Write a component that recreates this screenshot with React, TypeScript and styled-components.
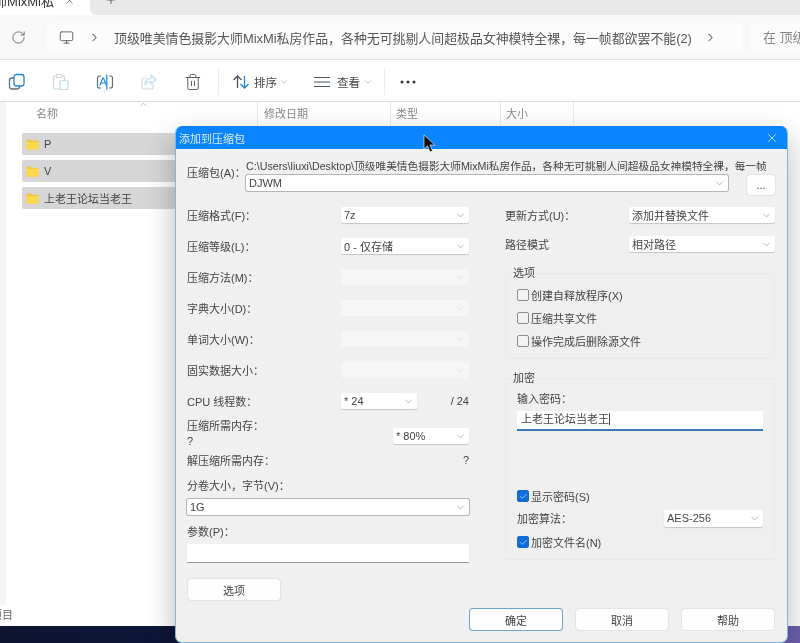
import React from "react";
import styled, { createGlobalStyle } from "styled-components";
import { ChevronDown, ChevronRight, ChevronUp, Monitor, Plus, RotateCw, X, Trash2, Check } from "lucide-react";

const Global = createGlobalStyle`
  html, body { margin: 0; padding: 0; background: #fff; }
  body { font-family: "Liberation Sans", "Noto Sans CJK SC", sans-serif; color: #444; }
  * { box-sizing: border-box; }
`;

const Page = styled.div`
  position: relative; width: 800px; height: 643px; overflow: hidden;
  display: flex; flex-direction: column; background: #fff; filter: blur(0.35px);
`;
const TabBar = styled.div`
  height: 15px; flex: none; display: flex; background: #fff; overflow: hidden;
`;
const Tab = styled.div`
  width: 90px; height: 15px; flex: none; display: flex; align-items: flex-start; gap: 10px; color: #444;
  svg { margin-top: -5px; flex: none; }
`;
const TabTitle = styled.div`
  width: 54px; height: 15px; overflow: hidden; white-space: nowrap; font-size: 13px; line-height: 4px; color: #333; flex: none;
  direction: rtl; text-align: left;
`;
const TabStrip = styled.div`
  flex: 1; background: #e9e9e9; border-bottom-left-radius: 6px; display: flex; align-items: flex-start; padding-left: 15px; color: #444;
  svg { margin-top: -6px; }
`;
const AddressBar = styled.div`
  height: 45px; flex: none; display: flex; align-items: center; background: #f8f8f8; border-bottom: 1px solid #e4e4e4; padding-left: 11px;
`;
const Refresh = styled.div`
  width: 36px; display: flex; color: #666; flex: none;
`;
const AddressBox = styled.div`
  width: 696px; height: 29px; flex: none; background: #fcfcfc; border-radius: 4px; display: flex; align-items: center;
  padding-left: 12px; color: #555;
`;
const Crumb = styled.span`
  font-size: 12.9px; color: #555; white-space: nowrap; margin: 0 12px 0 13px; width: 578px;
`;
const CrumbArrow = styled.span`
  display: flex; margin-left: 14px;
`;
const SearchBox = styled.div`
  flex: 1; margin-left: 7px; height: 29px; background: #fcfcfc; border-radius: 4px 0 0 4px; font-size: 13px; color: #888;
  padding-left: 13px; line-height: 29px; white-space: nowrap; overflow: hidden;
`;
const Toolbar = styled.div`
  height: 42px; flex: none; display: flex; align-items: center; background: #fff; border-bottom: 1px solid #ddd; padding: 2px 0 0 8px;
`;
const ToolIcon = styled.div<{ $mr?: number }>`
  width: 18px; height: 18px; margin-right: ${(p) => p.$mr ?? 26}px; display: flex; flex: none;
`;
const ToolSep = styled.div`
  width: 1px; height: 26px; background: #ececec; flex: none;
`;
const ToolText = styled.div<{ $ml: number }>`
  display: flex; align-items: center; font-size: 11.5px; color: #444; flex: none; width: 70px; margin-left: ${(p) => p.$ml}px;
  svg { flex: none; }
`;
const ToolLabel = styled.span<{ $l: number; $r: number }>`
  margin: 0 ${(p) => p.$r}px 0 ${(p) => p.$l}px;
`;
const Dots = styled.svg`
  width: 16px; height: 4px; margin-left: 15px; flex: none;
`;
const Content = styled.div`
  flex: 1; display: flex; min-height: 0; background: #fff;
`;
const NavEdge = styled.div`
  width: 6px; flex: none; height: 503px; background: #f5f5f5;
`;
const Files = styled.div`
  flex: 1; display: flex; flex-direction: column; position: relative;
`;
const Header = styled.div`
  height: 23px; display: flex; font-size: 11px; color: #888; align-items: stretch; flex: none;
`;
const Column = styled.div<{ $w: number; $pad: number }>`
  width: ${(p) => p.$w}px; padding-left: ${(p) => p.$pad}px; line-height: 24px; flex: none; position: relative;
  border-right: 1px solid #e8e8e8;
`;
const SortCaret = styled.span`
  position: absolute; top: -3px; left: 132px; color: #888; display: flex;
`;
const Rows = styled.div`
  padding: 8px 0 0 16px; display: flex; flex-direction: column; gap: 5px; flex: none;
`;
const FileRow = styled.div`
  width: 154px; height: 22px; background: #d6d6d6; border-radius: 2px; display: flex; align-items: center; font-size: 11px; color: #444; padding-left: 4px; gap: 5px;
`;
const Status = styled.div`
  position: absolute; left: -6px; bottom: 0; width: 13px; height: 22px; overflow: hidden; display: flex; justify-content: flex-end;
  font-size: 11px; color: #666; line-height: 22px; white-space: nowrap;
`;
const Wallpaper = styled.div`
  height: 17px; flex: none; background: linear-gradient(90deg, #0d1430 0%, #101a45 50%, #0c1230 85%, #6c5fb0 98%);
`;

const Dialog = styled.div`
  position: absolute; left: 175px; top: 126px; width: 613px; height: 517px; border-radius: 7px; background: #f0f0f0;
  border: 1px solid #7db8e0; border-top: 0; box-shadow: 0 12px 30px rgba(0,0,0,.28); display: flex; flex-direction: column; overflow: hidden;
`;
const TitleBar = styled.div`
  height: 23px; flex: none; background: #0a84ff; color: #dcecff; font-size: 11px; display: flex; align-items: center; justify-content: space-between;
  padding: 0 8px 0 3px;
`;
const DialogBody = styled.div`
  padding: 8px 12px 0 11px; display: flex; flex-direction: column;
`;
const ArchiveRow = styled.div`
  display: flex; height: 37px;
`;
const ArchiveLabel = styled.div`
  width: 59px; flex: none; font-size: 11px; line-height: 16px; margin-top: 8px; color: #444;
`;
const ArchiveField = styled.div`
  flex: 1; display: flex; flex-direction: column; min-width: 0;
`;
const PathText = styled.div`
  font-size: 10.7px; line-height: 14px; margin-top: 2px; color: #444; white-space: nowrap; height: 15px;
`;
const ArchiveInputs = styled.div`
  display: flex; align-items: flex-start; gap: 19px; margin-top: 2px;
`;
const Columns = styled.div`
  display: grid; grid-template-columns: 282px 270px; column-gap: 36px; margin-top: 13px;
`;
const Stack = styled.div`
  display: flex; flex-direction: column;
`;
const Row = styled.div<{ $mb?: number; $mt?: number }>`
  display: flex; align-items: center; justify-content: space-between; height: 16px; margin-bottom: ${(p) => p.$mb ?? 15}px;
  margin-top: ${(p) => p.$mt ?? 0}px; font-size: 11px; color: #444; flex: none;
`;
const Label = styled.span`
  font-size: 11px; color: #444; white-space: nowrap;
`;
const SelectBox = styled.div<{ $w: number | string; $h?: number; $off?: boolean; $framed?: boolean }>`
  width: ${(p) => (typeof p.$w === "number" ? `${p.$w}px` : p.$w)}; height: ${(p) => p.$h ?? 16}px; flex: none;
  background: ${(p) => (p.$off ? "#f6f6f6" : "#fff")}; display: flex; align-items: center; justify-content: space-between;
  padding: 0 3px; font-size: 11px; border-radius: 2px;
  box-shadow: ${(p) => (p.$off ? "none" : p.$framed ? "0 0 0 1px #b5b5b5" : "0 1px 1px rgba(0,0,0,.18)")};
  color: ${(p) => (p.$off ? "#ccc" : "#444")};
  svg { color: ${(p) => (p.$off ? "#ccc" : "#777")}; flex: none; }
`;
const ThreadGroup = styled.div`
  display: flex; align-items: center; justify-content: space-between; width: 128px; font-size: 11px;
`;
const MemoryRow = styled.div`
  display: flex; justify-content: space-between; height: 30px; margin-top: -5px; margin-bottom: 3px; flex: none;
`;
const MemoryLabels = styled.div`
  display: flex; flex-direction: column; font-size: 11px; line-height: 15px;
`;
const MemorySelect = styled.div`
  padding-top: 9px;
`;
const ParamInput = styled.div`
  height: 19px; background: #fff; border-bottom: 1px solid #999; margin-bottom: 16px; flex: none;
`;
const PlainButton = styled.div<{ $primary?: boolean; $w?: number; $h?: number; $ml?: number }>`
  width: ${(p) => p.$w ?? 92}px; height: ${(p) => p.$h ?? 21}px; flex: none; background: #fdfdfd; border-radius: 3px; font-size: 11px; color: #444;
  margin-left: ${(p) => p.$ml ?? 0}px; display: flex; align-items: center; justify-content: center;
  box-shadow: ${(p) => (p.$primary ? "0 0 0 1px #6fa3c8" : "0 0 1.5px rgba(0,0,0,.25)")};
`;
const Group = styled.div<{ $h: number; $mb?: number; $pt: number }>`
  position: relative; height: ${(p) => p.$h}px; margin-bottom: ${(p) => p.$mb ?? 0}px; border: 1px solid #e8e8e8; padding: ${(p) => p.$pt}px 11px 0;
  display: flex; flex-direction: column; background: #efefef; flex: none;
`;
const Legend = styled.span`
  position: absolute; left: 6px; top: -8px; background: #f0f0f0; padding: 0 1px; font-size: 11px; line-height: 14px; color: #444;
`;
const CheckRow = styled.div<{ $mb?: number }>`
  display: flex; align-items: center; gap: 2px; height: 16px; font-size: 11px; color: #444; margin-bottom: ${(p) => p.$mb ?? 7}px; flex: none;
`;
const CheckBox = styled.span<{ $on?: boolean }>`
  width: 12px; height: 12px; border-radius: 2px; flex: none; display: flex; align-items: center; justify-content: center;
  background: ${(p) => (p.$on ? "#0f6cd8" : "#f3f3f3")}; border: 1px solid ${(p) => (p.$on ? "#0f6cd8" : "#8c8c8c")}; color: #cfe4ff;
`;
const PasswordInput = styled.div`
  height: 20px; background: #fff; border-bottom: 2px solid #3a78b5; margin-top: 5px; font-size: 11px; line-height: 17px; padding-left: 4px; color: #444; flex: none;
`;
const Caret = styled.span`
  display: inline-block; width: 1px; height: 12px; background: #444; vertical-align: -2px;
`;
const Spacer = styled.div`
  height: 57px; flex: none;
`;
const Footer = styled.div`
  display: flex; justify-content: flex-end; gap: 14px; margin-top: 9px; padding-right: 1px;
`;
const CursorMark = styled.svg`
  position: absolute; left: 423px; top: 134px; width: 13px; height: 19px;
`;

const Folder = () => (
  <svg width="13" height="11" viewBox="0 0 13 11">
    <path d="M0.5 1.5a1 1 0 0 1 1-1h3l1.3 1.3h5.7a1 1 0 0 1 1 1v6.7a1 1 0 0 1-1 1H1.5a1 1 0 0 1-1-1z" fill="#f5c63a" />
    <rect x="0.5" y="3" width="12" height="7.5" rx="1" fill="#fbd94e" />
  </svg>
);
const CopyIcon = () => (
  <svg viewBox="0 0 18 18" width="18" height="18" fill="none" strokeWidth="1.3">
    <rect x="1.5" y="5" width="10" height="11" rx="2.5" stroke="#5e6f7a" />
    <rect x="6" y="1.5" width="10" height="11.5" rx="2.5" fill="#fff" stroke="#1a86d8" />
  </svg>
);
const PasteIcon = () => (
  <svg viewBox="0 0 18 18" width="18" height="18" fill="none" strokeWidth="1.2">
    <rect x="1.5" y="3" width="11" height="13" rx="1.5" stroke="#d2d6d8" />
    <rect x="4.5" y="1.5" width="5" height="3" rx="1" fill="#fff" stroke="#d2d6d8" />
    <rect x="8" y="7.5" width="8" height="9" rx="1.5" fill="#fff" stroke="#b8dcf0" />
  </svg>
);
const RenameIcon = () => (
  <svg viewBox="0 0 18 18" width="18" height="18" fill="none" strokeWidth="1.2">
    <path d="M5 3H3.5a2 2 0 0 0-2 2v8a2 2 0 0 0 2 2H5M13 3h1.5a2 2 0 0 1 2 2v8a2 2 0 0 1-2 2H13" stroke="#5e6f7a" />
    <path d="M10.8 1.5v15" stroke="#1a86d8" />
    <path d="M3.8 12.5 6.8 5h.7l3 7.5M5 10h4.2" stroke="#1a86d8" />
  </svg>
);
const ShareIcon = () => (
  <svg viewBox="0 0 18 18" width="18" height="18" fill="none" strokeWidth="1.2" stroke="#bfdff2">
    <path d="M13 11v3a2 2 0 0 1-2 2H4a2 2 0 0 1-2-2V7a2 2 0 0 1 2-2h2" stroke="#d2d6d8" />
    <path d="M11 2l5 4.5-5 4.5V8.5c-3 0-5 1-6 3.5 0-4 2-6.5 6-6.5z" />
  </svg>
);
const SortIcon = () => (
  <svg viewBox="0 0 18 18" width="18" height="18" fill="none" strokeWidth="1.3">
    <path d="M5.5 15V3M1.5 7l4-4 4 4" stroke="#4a5560" />
    <path d="M12.5 3v12M8.5 11l4 4 4-4" stroke="#1a86d8" />
  </svg>
);
const LinesIcon = () => (
  <svg viewBox="0 0 16 12" width="16" height="12" fill="none" strokeWidth="1.1" stroke="#4a5560">
    <path d="M0 1.5h16M0 6h16M0 10.5h16" />
  </svg>
);

const Select = ({ w, h, off, framed, children }: { w: number | string; h?: number; off?: boolean; framed?: boolean; children?: React.ReactNode }) => (
  <SelectBox $w={w} $h={h} $off={off} $framed={framed}>
    <span>{children}</span>
    <ChevronDown size={11} strokeWidth={1.2} />
  </SelectBox>
);

const leftRows: [string, string, boolean][] = [
  ["压缩格式(F)：", "7z", false],
  ["压缩等级(L)：", "0 - 仅存储", false],
  ["压缩方法(M)：", "", true],
  ["字典大小(D)：", "", true],
  ["单词大小(W)：", "", true],
  ["固实数据大小：", "", true],
];

export default function App() {
  return (
    <Page>
      <Global />
      <TabBar>
        <Tab>
          <TabTitle>师MixMi私</TabTitle>
          <X size={11} strokeWidth={1.4} />
        </Tab>
        <TabStrip>
          <Plus size={12} strokeWidth={1.6} />
        </TabStrip>
      </TabBar>
      <AddressBar>
        <Refresh><RotateCw size={15} strokeWidth={1.5} /></Refresh>
        <AddressBox>
          <Monitor size={15} strokeWidth={1.4} />
          <CrumbArrow><ChevronRight size={13} strokeWidth={1.9} /></CrumbArrow>
          <Crumb>顶级唯美情色摄影大师MixMi私房作品，各种无可挑剔人间超极品女神模特全裸，每一帧都欲罢不能(2)</Crumb>
          <ChevronRight size={13} strokeWidth={1.9} />
        </AddressBox>
        <SearchBox>在 顶级唯美情色</SearchBox>
      </AddressBar>
      <Toolbar>
        <ToolIcon><CopyIcon /></ToolIcon>
        <ToolIcon><PasteIcon /></ToolIcon>
        <ToolIcon><RenameIcon /></ToolIcon>
        <ToolIcon><ShareIcon /></ToolIcon>
        <ToolIcon $mr={16}><Trash2 size={18} strokeWidth={1.2} color="#4a5560" /></ToolIcon>
        <ToolSep />
        <ToolText $ml={13}>
          <SortIcon />
          <ToolLabel $l={4} $r={2}>排序</ToolLabel>
          <ChevronDown size={10} strokeWidth={1.2} color="#888" />
        </ToolText>
        <ToolText $ml={12}>
          <LinesIcon />
          <ToolLabel $l={7} $r={3}>查看</ToolLabel>
          <ChevronDown size={10} strokeWidth={1.2} color="#888" />
        </ToolText>
        <ToolSep />
        <Dots viewBox="0 0 16 4">
          <circle cx="2" cy="2" r="1.5" fill="#333" />
          <circle cx="8" cy="2" r="1.5" fill="#333" />
          <circle cx="14" cy="2" r="1.5" fill="#333" />
        </Dots>
      </Toolbar>
      <Content>
        <NavEdge />
        <Files>
          <Header>
            <Column $w={252} $pad={30}>
              名称
              <SortCaret><ChevronUp size={11} strokeWidth={1.2} /></SortCaret>
            </Column>
            <Column $w={133} $pad={6}>修改日期</Column>
            <Column $w={110} $pad={5}>类型</Column>
            <Column $w={73} $pad={5}>大小</Column>
          </Header>
          <Rows>
            <FileRow><Folder />P</FileRow>
            <FileRow><Folder />V</FileRow>
            <FileRow><Folder />上老王论坛当老王</FileRow>
          </Rows>
          <Status>8 个项目</Status>
        </Files>
      </Content>
      <Wallpaper />

      <Dialog>
        <TitleBar>
          <span>添加到压缩包</span>
          <X size={14} strokeWidth={1.4} color="#d6eaff" />
        </TitleBar>
        <DialogBody>
          <ArchiveRow>
            <ArchiveLabel>压缩包(A)：</ArchiveLabel>
            <ArchiveField>
              <PathText>C:\Users\liuxi\Desktop\顶级唯美情色摄影大师MixMi私房作品，各种无可挑剔人间超极品女神模特全裸，每一帧</PathText>
              <ArchiveInputs>
                <Select w={482} framed>DJWM</Select>
                <PlainButton $w={28} $h={20}>...</PlainButton>
              </ArchiveInputs>
            </ArchiveField>
          </ArchiveRow>
          <Columns>
            <Stack>
              {leftRows.map(([label, value, off]) => (
                <Row key={label}>
                  <Label>{label}</Label>
                  <Select w={128} off={off}>{value}</Select>
                </Row>
              ))}
              <Row>
                <Label>CPU 线程数：</Label>
                <ThreadGroup>
                  <Select w={76}>* 24</Select>
                  <span>/ 24</span>
                </ThreadGroup>
              </Row>
              <MemoryRow>
                <MemoryLabels>
                  <span>压缩所需内存：</span>
                  <span>?</span>
                </MemoryLabels>
                <MemorySelect><Select w={76}>* 80%</Select></MemorySelect>
              </MemoryRow>
              <Row $mb={9}>
                <Label>解压缩所需内存：</Label>
                <span>?</span>
              </Row>
              <Row $mb={6}><Label>分卷大小，字节(V)：</Label></Row>
              <Select w="100%" h={16} framed>1G</Select>
              <Row $mb={5} $mt={8}><Label>参数(P)：</Label></Row>
              <ParamInput />
              <PlainButton $ml={1}>选项</PlainButton>
            </Stack>
            <Stack>
              <Row $mb={13}>
                <Label>更新方式(U)：</Label>
                <Select w={146}>添加并替换文件</Select>
              </Row>
              <Row $mb={21}>
                <Label>路径模式</Label>
                <Select w={146}>相对路径</Select>
              </Row>
              <Group $h={86} $mb={19} $pt={13}>
                <Legend>选项</Legend>
                <CheckRow><CheckBox />创建自释放程序(X)</CheckRow>
                <CheckRow><CheckBox />压缩共享文件</CheckRow>
                <CheckRow><CheckBox />操作完成后删除源文件</CheckRow>
              </Group>
              <Group $h={182} $pt={11}>
                <Legend>加密</Legend>
                <Label>输入密码：</Label>
                <PasswordInput>上老王论坛当老王<Caret /></PasswordInput>
                <Spacer />
                <CheckRow $mb={6}><CheckBox $on><Check size={9} strokeWidth={2} /></CheckBox>显示密码(S)</CheckRow>
                <Row $mb={8}>
                  <Label>加密算法：</Label>
                  <Select w={99} h={17}>AES-256</Select>
                </Row>
                <CheckRow $mb={0}><CheckBox $on><Check size={9} strokeWidth={2} /></CheckBox>加密文件名(N)</CheckRow>
              </Group>
            </Stack>
          </Columns>
          <Footer>
            <PlainButton $primary>确定</PlainButton>
            <PlainButton>取消</PlainButton>
            <PlainButton>帮助</PlainButton>
          </Footer>
        </DialogBody>
      </Dialog>
      <CursorMark viewBox="0 0 13 19">
        <path d="M1 1v14l3.5-3.2 2.5 6 2.5-1-2.5-5.8h5z" fill="#111" stroke="#fff" strokeWidth="0.6" />
      </CursorMark>
    </Page>
  );
}
